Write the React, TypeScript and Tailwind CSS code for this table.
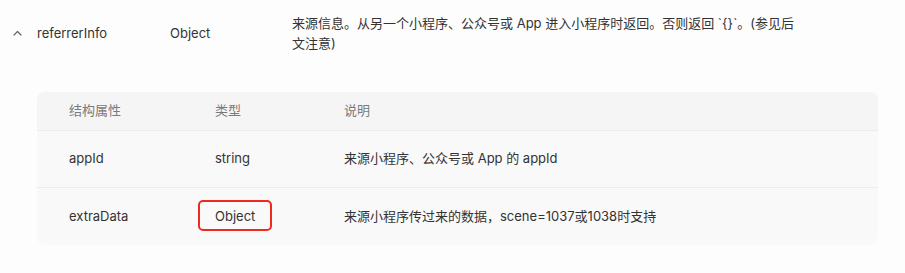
const font = { fontFamily: 'Inter, "Noto Sans CJK SC", sans-serif' };

const rows = [
  { name: "appId", type: "string", desc: "来源小程序、公众号或 App 的 appId", mark: false },
  { name: "extraData", type: "Object", desc: "来源小程序传过来的数据，scene=1037或1038时支持", mark: true },
];

const intro = "来源信息。从另一个小程序、公众号或 App 进入小程序时返回。否则返回 `{}`。(参见后文注意)";

function Chevron() {
  return (
    <svg width="9" height="6" viewBox="0 0 9 6" fill="none" className="text-[#666]">
      <path d="M1 5 L4.5 1.5 L8 5" stroke="currentColor" strokeWidth="1.2" strokeLinecap="round" strokeLinejoin="round" />
    </svg>
  );
}

export default function App() {
  return (
    <div className="w-[905px] h-[273px] bg-[#fdfdfd] text-[13px] text-[#333] pt-[13px]" style={font}>
      <div className="flex items-center leading-[20px]">
        <div className="w-[37px] flex justify-end pr-[15px]">
          <Chevron />
        </div>
        <div className="w-[133px]">referrerInfo</div>
        <div className="w-[122px]">Object</div>
        <div className="w-[506px]">{intro}</div>
      </div>

      <div className="mt-[39px] ml-[37px] mr-[27px] rounded-lg overflow-hidden bg-[#f9f9f9]">
        <div className="flex items-center h-[39px] bg-[#f5f5f5] border-b border-[#ececec] pl-8 text-[#7a7a7a]">
          <div className="w-[146px]">结构属性</div>
          <div className="w-[129px]">类型</div>
          <div>说明</div>
        </div>
        {rows.map((r, i) => (
          <div
            key={r.name}
            className={`flex items-center h-[57px] pl-8 ${i === 0 ? "border-b border-[#ececec]" : ""}`}
          >
            <div className="w-[146px]">{r.name}</div>
            <div className="w-[129px]">
              <span className="relative">
                {r.type}
                {r.mark && (
                  <span className="absolute left-[-17px] right-[-17px] top-[-8px] bottom-[-7px] border-2 border-[#ee2a1f] rounded-[5px]" />
                )}
              </span>
            </div>
            <div>{r.desc}</div>
          </div>
        ))}
      </div>
    </div>
  );
}
